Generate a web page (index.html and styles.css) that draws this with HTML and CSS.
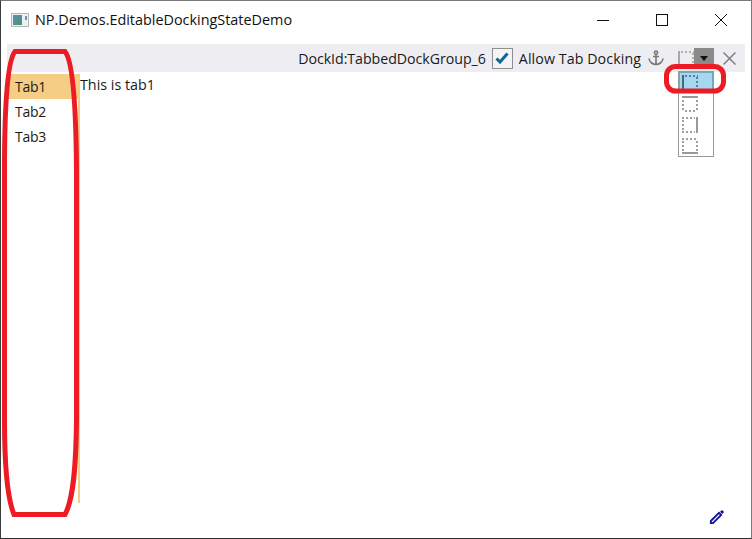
FILE: index.html
```html
<!DOCTYPE html>
<html lang="en">
<head>
<meta charset="utf-8">
<title>NP.Demos.EditableDockingStateDemo</title>
<link rel="stylesheet" href="styles.css">
</head>
<body>
<div class="window">
  <header class="titlebar">
    <svg class="app-icon" width="18" height="16" viewBox="0 0 18 16">
      <defs><linearGradient id="ai" x1="0" y1="0" x2="1" y2="1"><stop offset="0" stop-color="#5b8fb5"/><stop offset="1" stop-color="#4d9468"/></linearGradient></defs>
      <rect x="0.5" y="1.5" width="17" height="13" fill="#eef0f2" stroke="#b4b8bc"/>
      <rect x="2" y="3" width="9" height="10" fill="url(#ai)"/>
      <rect x="14" y="4" width="2" height="4" fill="#6a9ab5"/>
    </svg>
    <span class="title">NP.Demos.EditableDockingStateDemo</span>
    <div class="caption">
      <span class="cap-btn"><svg width="12" height="12" viewBox="0 0 12 12"><path d="M0 6.5H12" stroke="#111"/></svg></span>
      <span class="cap-btn"><svg width="12" height="12" viewBox="0 0 12 12"><rect x="0.5" y="0.5" width="11" height="11" fill="none" stroke="#111"/></svg></span>
      <span class="cap-btn"><svg width="12" height="12" viewBox="0 0 12 12"><path d="M0 0L12 12M12 0L0 12" stroke="#111"/></svg></span>
    </div>
  </header>
  <div class="content">
    <div class="toolbar">
      <span class="dock-id">DockId:TabbedDockGroup_6</span>
      <span class="check"><svg width="14" height="12" viewBox="0 0 14 12"><path d="M1.5 6.5L5 10L12.5 1.5" fill="none" stroke="#0e6696" stroke-width="3"/></svg></span>
      <span class="allow">Allow Tab Docking</span>
      <svg class="anchor" width="16" height="16" viewBox="0 0 16 16" fill="none" stroke="#777" stroke-width="1.6"><circle cx="8" cy="2.6" r="1.6"/><path d="M8 4.2V14.5M5 6.5H11M1 8.5C1.5 12.5 5 14.5 8 14.5C11 14.5 14.5 12.5 15 8.5"/></svg>
      <span class="combo">
        <svg class="state-icon" width="16" height="16" viewBox="0 0 16 16"><path d="M1 0V16" stroke="#a8a8a8" stroke-width="2"/><path d="M3 1H16M15 2V16M3 15H16" stroke="#b0b0b0" stroke-width="2" stroke-dasharray="2 2" fill="none"/></svg>
        <span class="combo-arrow"><i class="tri"></i></span>
      </span>
      <svg class="close" width="13" height="13" viewBox="0 0 13 13"><path d="M0.5 0.5L12.5 12.5M12.5 0.5L0.5 12.5" stroke="#808080" stroke-width="1.5"/></svg>
    </div>
    <div class="dock">
      <nav class="tabs">
        <div class="tab tab-active">Tab1</div>
        <div class="tab">Tab2</div>
        <div class="tab">Tab3</div>
      </nav>
      <main class="pane">This is tab1</main>
    </div>
  </div>

  <div class="dropdown">
    <div class="opt opt-active"><svg width="16" height="16" viewBox="0 0 16 16"><path d="M1 0V16" stroke="#3f6a80" stroke-width="2"/><path d="M3 1H16M15 2V16M3 15H16" stroke="#5c7f92" stroke-width="2" stroke-dasharray="2 2" fill="none"/></svg></div>
    <div class="opt"><svg width="16" height="16" viewBox="0 0 16 16"><path d="M0 1H16" stroke="#999" stroke-width="2"/><path d="M1 4V16M15 4V16M3 15H14" stroke="#a0a0a0" stroke-width="2" stroke-dasharray="2 2" fill="none"/></svg></div>
    <div class="opt"><svg width="16" height="16" viewBox="0 0 16 16"><path d="M15 0V16" stroke="#999" stroke-width="2"/><path d="M0 1H13M1 3V14M0 15H13" stroke="#a0a0a0" stroke-width="2" stroke-dasharray="2 2" fill="none"/></svg></div>
    <div class="opt"><svg width="16" height="16" viewBox="0 0 16 16"><path d="M0 15H16" stroke="#999" stroke-width="2"/><path d="M0 1H16M1 3V13M15 3V13" stroke="#a0a0a0" stroke-width="2" stroke-dasharray="2 2" fill="none"/></svg></div>
  </div>

  <svg class="pencil" width="16" height="16" viewBox="0 0 16 16"><path d="M1.8 12L10 3.8L12.2 6L4 14.2H1.8Z" fill="none" stroke="#14149a" stroke-width="1.8"/><path d="M11 2.8L13 0.9L15.1 3L13.2 5Z" fill="#14149a"/></svg>

  <svg class="marks" width="752" height="539" viewBox="0 0 752 539" fill="none" stroke="#ed1c24" stroke-width="5">
    <path d="M15 51.5H65C72 60 76 100 76.5 170V420C76 470 73 500 65 514.5H14C8 500 4.5 470 4.5 420V170C4.5 100 8 60 15 51.5Z"/>
    <rect x="666.5" y="66.5" width="57" height="24.5" rx="9"/>
  </svg>
</div>
</body>
</html>
```
FILE: styles.css
```css
* { box-sizing: border-box; }
html, body { margin: 0; padding: 0; }
body { background: #fff; font-family: "Open Sans", "Noto Sans", sans-serif; color: #1a1a1a; }

.window {
  position: relative;
  width: 752px;
  height: 539px;
  overflow: hidden;
  display: flex;
  flex-direction: column;
  background: #fff;
  border-top: 1px solid #7a7a7a;
  border-left: 1px solid #3c3c3c;
  border-right: 1px solid #7a7a7a;
  border-bottom: 1px solid #2e2e2e;
}

.titlebar { height: 43px; flex: none; display: flex; align-items: center; padding: 0 0 6px 10px; }
.app-icon { flex: none; }
.title { margin-left: 6px; font-size: 14.4px; color: #111; }
.caption { margin-left: auto; display: flex; padding-right: 1px; }
.cap-btn { width: 59px; height: 30px; display: flex; align-items: center; justify-content: center; }

.content { flex: 1; display: flex; flex-direction: column; padding: 0 6px 35px; }

.toolbar {
  height: 28px;
  flex: none;
  display: flex;
  align-items: center;
  background: #eeeef2;
  font-size: 14.2px;
}
.dock-id { margin-left: auto; letter-spacing: -0.04px; }
.check {
  width: 21px; height: 21px; margin-left: 6px;
  display: flex; align-items: center; justify-content: center;
  background: #f4f4f7; border: 1px solid #8f8f8f;
}
.allow { margin-left: 6px; letter-spacing: 0.1px; }
.anchor { margin-left: 7px; flex: none; }
.combo { display: flex; align-items: flex-start; margin-left: 14px; height: 20px; }
.state-icon { margin-top: 3px; flex: none; }
.combo-arrow { width: 20px; height: 20px; background: #8a8a8a; display: flex; align-items: center; justify-content: center; }
.tri { width: 0; height: 0; border-left: 4px solid transparent; border-right: 4px solid transparent; border-top: 5px solid #111; }
.close { margin: 0 9px 0 9px; flex: none; }

.dock { flex: 1; display: flex; margin-top: 2px; }
.tabs { width: 73px; flex: none; border-right: 2px solid #f5cd84; font-size: 14px; }
.tab { height: 25px; padding-left: 8px; line-height: 25px; letter-spacing: -0.3px; }
.tab-active { background: #f5cd84; }
.pane { flex: 1; font-size: 14.3px; line-height: 21px; }

.dropdown {
  position: absolute;
  left: 677px; top: 70px;
  width: 36px;
  background: #fff;
  border: 1px solid #999;
  display: flex; flex-direction: column;
}
.opt { height: 21px; display: flex; align-items: center; padding-left: 3px; }
.opt-active { background: #a3d8f0; border: 1px solid #7fa6b8; padding-left: 2px; }

.pencil { position: absolute; left: 708px; top: 508px; }
.marks { position: absolute; left: -1px; top: -1px; pointer-events: none; }
```
